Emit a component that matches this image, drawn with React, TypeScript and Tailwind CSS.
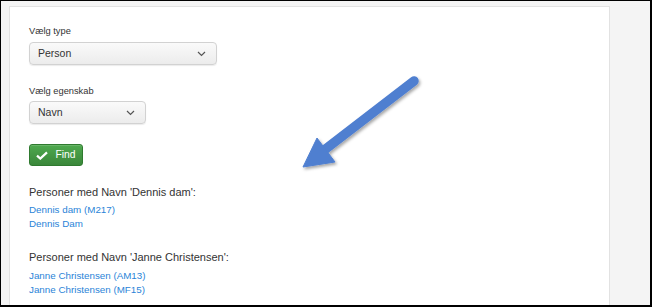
import React from 'react';

function Chevron() {
  return (
    <svg width="9" height="6" viewBox="0 0 9 6" className="shrink-0">
      <path d="M1 1 L4.5 4.5 L8 1" fill="none" stroke="#555" strokeWidth="1.2" />
    </svg>
  );
}

function SelectBox({ value, width }: { value: string; width: string }) {
  return (
    <div
      className={`${width} h-[23px] flex items-center justify-between pl-[8px] pr-[10px] rounded-[4px] border border-[#d2d2d2] bg-gradient-to-b from-[#fafafa] to-[#ececec] shadow-[0_1px_1px_rgba(0,0,0,0.08)] text-[10.5px] text-[#333]`}
    >
      <span>{value}</span>
      <Chevron />
    </div>
  );
}

function Arrow() {
  return (
    <svg className="absolute left-0 top-0 pointer-events-none" width="652" height="307">
      <defs>
        <filter id="sh" x="-20%" y="-20%" width="140%" height="140%">
          <feDropShadow dx="1.5" dy="2" stdDeviation="1.5" floodColor="#000" floodOpacity="0.35" />
        </filter>
      </defs>
      <g filter="url(#sh)" fill="#4f7fd0" stroke="#4f7fd0">
        <line x1="413" y1="80" x2="322" y2="150" strokeWidth="9.5" strokeLinecap="round" />
        <polygon points="302,166 316,137 334,161" strokeWidth="1" strokeLinejoin="round" />
      </g>
    </svg>
  );
}

export default function App() {
  return (
    <div
      className="relative w-[652px] h-[307px] overflow-hidden bg-[#f4f4f4] border-t border-l border-r-2 border-b-2 border-black"
      style={{ fontFamily: '"Liberation Sans", Arial, sans-serif' }}
    >
      <div className="ml-[8px] mt-[5px] w-[601px] h-[320px] bg-white border border-[#e2e2e2] pl-[19px] pt-[17px] flex flex-col items-start">
        <div className="text-[9.3px] leading-[14px] text-[#333] mb-[4px]">Vælg type</div>
        <SelectBox value="Person" width="w-[188px]" />
        <div className="text-[9.3px] leading-[14px] text-[#333] mt-[19px] mb-[3px]">Vælg egenskab</div>
        <SelectBox value="Navn" width="w-[117px]" />
        <button className="mt-[20px] h-[22px] w-[54px] flex items-center justify-center gap-[7px] rounded-[3px] border border-[#2f7a2f] bg-gradient-to-b from-[#4fa94f] to-[#3a873a] text-white text-[10.3px] shadow-[inset_0_1px_0_rgba(255,255,255,0.15)]">
          <svg width="12" height="9" viewBox="0 0 12 9">
            <path d="M1 4.6 L4.3 7.6 L11 1.4" fill="none" stroke="#fff" strokeWidth="2.2" />
          </svg>
          <span>Find</span>
        </button>
        <div className="mt-[18px] text-[11px] leading-[16px] text-[#333]">Personer med Navn 'Dennis dam':</div>
        <div className="mt-[3px] flex flex-col text-[9.8px] leading-[14px] text-[#2a84d8]">
          <span>Dennis dam (M217)</span>
          <span>Dennis Dam</span>
        </div>
        <div className="mt-[18px] text-[11px] leading-[16px] text-[#333]">Personer med Navn 'Janne Christensen':</div>
        <div className="mt-[4px] flex flex-col text-[9.8px] leading-[14px] text-[#2a84d8]">
          <span>Janne Christensen (AM13)</span>
          <span>Janne Christensen (MF15)</span>
        </div>
      </div>
      <Arrow />
    </div>
  );
}
